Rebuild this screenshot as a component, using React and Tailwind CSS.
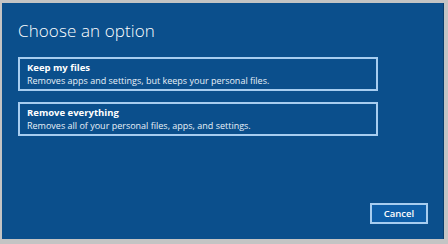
export default function App() {
  const font = { fontFamily: '"Open Sans", "Noto Sans", sans-serif' };
  return (
    <div className="w-[448px] h-[244px] bg-[#c4c4c4] pt-[3px] pl-[2px] pr-[4px] pb-[5px]" style={font}>
      <div className="w-full h-full bg-[#0b4f8c] flex flex-col pl-[16px] pr-[15px] pt-[15px] pb-[15px] border-r border-[#083d6c]">
        <h1 className="text-[17px] font-light text-white leading-[26px] tracking-[0.1px]">Choose an option</h1>
        <div className="mt-[13px] flex flex-col gap-[11px] w-[360px]">
          <div className="border-2 border-[#a7cdf0] h-[34px] px-[7px] flex flex-col justify-center text-white">
            <div className="text-[9.5px] font-bold leading-[13px]">Keep my files</div>
            <div className="text-[9px] leading-[13px] text-[#e8f0f8]">Removes apps and settings, but keeps your personal files.</div>
          </div>
          <div className="border-2 border-[#a7cdf0] h-[34px] px-[7px] flex flex-col justify-center text-white">
            <div className="text-[9.5px] font-bold leading-[13px]">Remove everything</div>
            <div className="text-[9px] leading-[13px] text-[#e8f0f8]">Removes all of your personal files, apps, and settings.</div>
          </div>
        </div>
        <div className="mt-auto flex justify-end">
          <button className="w-[58px] h-[21px] border-2 border-[#a7cdf0] bg-[#0e5ea8] text-white text-[9.5px] font-semibold leading-none">Cancel</button>
        </div>
      </div>
    </div>
  );
}
